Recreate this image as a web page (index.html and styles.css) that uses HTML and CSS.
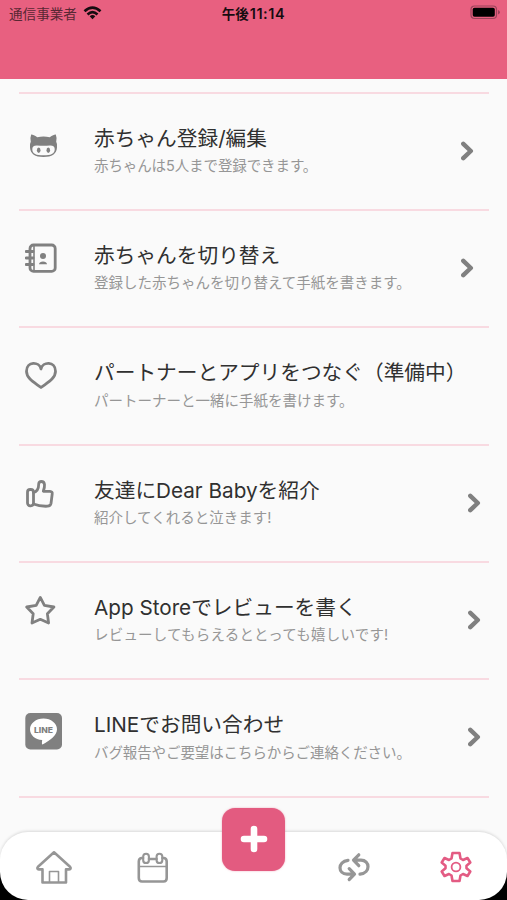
FILE: index.html
```html
<!DOCTYPE html>
<html lang="ja">
<head>
<meta charset="utf-8">
<title>Dear Baby</title>
<link rel="stylesheet" href="styles.css">
</head>
<body>
<div class="screen">
  <header class="header">
    <div class="carrier"><span>通信事業者</span>
      <svg width="19" height="14" viewBox="0 0 18 14" fill="none" stroke="#160c10" stroke-width="2.7"><path d="M1 5.2Q9-2 17 5.2M4 8.4Q9 4 14 8.4"/><path d="M6.2 10.2Q9 7.8 11.8 10.2L9 13.2Z" fill="#160c10" stroke="none"/></svg>
    </div>
    <time class="clock">午後<span>11:14</span></time>
    <svg class="battery" width="31" height="15" viewBox="0 0 31 15"><rect x="1" y="1" width="25.5" height="12.5" rx="3.5" fill="none" stroke="#9b435a" stroke-width="1.2"/><rect x="2.7" y="2.7" width="22.1" height="9.1" rx="1.8" fill="#000"/><path d="M28 5v4.5q2-.7 2-2.2T28 5" fill="#9b435a"/></svg>
  </header>
  <main class="list">
    <section class="row">
      <svg class="icon cat" width="40" height="44" viewBox="0 0 40 44"><path fill="#808080" d="M6.2 7.5Q8 7.2 12.3 10.3Q18.5 8.5 24.7 10.3Q29 7.2 30.8 7.5Q32.3 11.5 31.2 14.8Q32.5 17 32 20.5C31.6 27 27 30 18.5 30S5.4 27 5 20.5Q4.5 17 5.8 14.8Q4.7 11.5 6.2 7.5Z"/><path fill="#fafafa" d="M12 18.4Q18.5 19 25 18.4Q30 18.3 29.7 22.5C29.5 27.1 26 28.3 18.5 28.3S7.5 27.1 7.3 22.5Q7 18.3 12 18.4Z"/><ellipse cx="13.7" cy="23.2" rx="1.8" ry="2.7" fill="#808080"/><ellipse cx="23.3" cy="23.2" rx="1.8" ry="2.7" fill="#808080"/></svg>
      <div class="copy"><h2>赤ちゃん登録/編集</h2><p class="tight">赤ちゃんは5人まで登録できます。</p></div>
      <svg class="chevron inset" width="14" height="20" viewBox="0 0 14 20"><path d="M2.3 2.8L9.8 10L2.3 17.2"/></svg>
    </section>
    <section class="row">
      <svg class="icon line" width="40" height="44" viewBox="0 0 40 44"><rect x="5" y="3" width="25.2" height="26.4" rx="3.5"/><path d="M9 3.5V29" stroke-width="1.6"/><path d="M1 9.5H8M1 16H8M1 22.5H8"/><circle cx="18" cy="14" r="3" fill="#808080" stroke="none"/><path d="M14 22.2Q14.5 19.5 18 19.5T22 22.2Z" fill="#808080" stroke="none"/></svg>
      <div class="copy"><h2>赤ちゃんを切り替え</h2><p>登録した赤ちゃんを切り替えて手紙を書きます。</p></div>
      <svg class="chevron inset" width="14" height="20" viewBox="0 0 14 20"><path d="M2.3 2.8L9.8 10L2.3 17.2"/></svg>
    </section>
    <section class="row">
      <svg class="icon line" width="40" height="44" viewBox="0 0 40 44"><path d="M16 10C14.5 2.5 1.5 2 1.5 12.2C1.5 19.5 9.5 23.5 16 28.5C22.5 23.5 30.5 19.5 30.5 12.2C30.5 2 17.5 2.5 16 10Z"/></svg>
      <div class="copy"><h2>パートナーとアプリをつなぐ（準備中）</h2><p>パートーナーと一緒に手紙を書けます。</p></div>
    </section>
    <section class="row">
      <svg class="icon line" width="40" height="44" viewBox="0 0 40 44"><rect x="2.5" y="12.5" width="6" height="16.3" rx="2.7"/><path d="M8.5 15.5C12.5 14.5 13.7 11.5 13.7 7Q14 4.5 16.3 4.5C20.5 4.5 20 9.5 18.3 14.3H25Q27.7 14.5 27.2 17L26 26.5Q25.5 29 22.5 29.2Q14.5 29.5 8.5 27"/></svg>
      <div class="copy"><h2>友達にDear Babyを紹介</h2><p>紹介してくれると泣きます!</p></div>
      <svg class="chevron" width="14" height="20" viewBox="0 0 14 20"><path d="M2.3 2.8L9.8 10L2.3 17.2"/></svg>
    </section>
    <section class="row">
      <svg class="icon line" width="40" height="44" viewBox="0 0 40 44"><path d="M15.3 3.4L19.4 11.4L28.9 13L22.4 19.8L23.6 29L15.3 25.3L7 29L8.2 19.8L1.7 13L11.2 11.4Z"/></svg>
      <div class="copy"><h2>App Storeでレビューを書く</h2><p class="wide">レビューしてもらえるととっても嬉しいです!</p></div>
      <svg class="chevron" width="14" height="20" viewBox="0 0 14 20"><path d="M2.3 2.8L9.8 10L2.3 17.2"/></svg>
    </section>
    <section class="row">
      <svg class="icon app" width="40" height="44" viewBox="0 0 40 44"><rect x=".3" y="4" width="36.7" height="36.4" rx="5" fill="#808080"/><path fill="#fff" d="M18.5 9.5C26 9.5 32 14.3 32 20.2C32 26.5 25 31.5 17.5 35.5Q16.5 35.5 17.2 31C10 30.5 5 26 5 20.2C5 14.3 11 9.5 18.5 9.5Z"/><text x="18.5" y="23.5" text-anchor="middle" class="line-label" textLength="19" lengthAdjust="spacingAndGlyphs">LINE</text></svg>
      <div class="copy"><h2>LINEでお問い合わせ</h2><p class="tight">バグ報告やご要望はこちらからご連絡ください。</p></div>
      <svg class="chevron" width="14" height="20" viewBox="0 0 14 20"><path d="M2.3 2.8L9.8 10L2.3 17.2"/></svg>
    </section>
  </main>
  <div class="dock">
    <nav class="tabs">
      <svg class="home" width="40" height="40" viewBox="0 0 40 40"><path d="M20 5.3L4 19.7Q2.3 22 5 22.4H8.5V35.5H32V22.4H35Q37.7 22 36 19.7Z"/><path d="M15.5 35V24.5H24.5V35" stroke-width="1.6"/></svg>
      <svg width="40" height="40" viewBox="0 0 40 40"><path d="M10 11H8.5Q5.8 11.5 5.8 14.5V31Q5.8 34.5 9 34.5H30.5Q33.7 34.5 33.7 31V14.5Q33.7 11.5 31 11H29.5M16 12H23.5"/><rect x="10.2" y="6.7" width="5.7" height="9.3" rx="2.85" stroke-width="2.1"/><rect x="23.6" y="6.7" width="5.7" height="9.3" rx="2.85" stroke-width="2.1"/><path d="M6 19.5H33.5" stroke-width="1.5"/></svg>
      <span></span>
      <svg class="sync" width="40" height="40" viewBox="0 0 40 40"><path d="M14 13.3C3 14.7 4 27.2 13 27.2H20M15.2 21.7L20.5 27.2L15.2 32.5M26 27.2C37 25.8 36 13.2 27 13.2H20M24.8 7.8L19.5 13.2L24.8 18.7"/></svg>
      <svg class="active" width="40" height="40" viewBox="0 0 40 40"><path d="M16.5 6H23.5L24.5 11.5L27 13L31.5 11L34.3 15.5L30.5 18.7V21.3L34.3 24.5L31.5 29L27 27L24.5 28.5L23.5 34H16.5L15.5 28.5L13 27L8.5 29L5.7 24.5L9.5 21.3V18.7L5.7 15.5L8.5 11L13 13L15.5 11.5Z"/><circle cx="20" cy="20" r="4.4" stroke-width="1.8"/></svg>
    </nav>
    <button class="add" aria-label="追加"><svg width="30" height="30" viewBox="0 0 30 30"><path d="M15 5V25M5 15H25"/></svg></button>
  </div>
</div>
</body>
</html>
```
FILE: styles.css
```css
* { box-sizing: border-box; }
body { margin: 0; font-family: Inter, "Noto Sans CJK JP", sans-serif; }
svg { display: block; flex: none; }
.screen { width: 507px; height: 900px; background: #fafafa; overflow: hidden; position: relative; }
.header { height: 79px; background: #e86080; display: grid; grid-template-columns: 1fr auto 1fr; align-items: start; padding: 5px 6px 0 9px; color: #160c10; }
.carrier { display: flex; gap: 6px; font-size: 13.6px; line-height: 18px; color: #582733; }
.carrier svg { margin-top: 1px; }
.clock { font-size: 13.5px; font-weight: 700; line-height: 18px; margin-left: -3px; }
.clock span { font-size: 14.5px; font-weight: 600; letter-spacing: .6px; margin-left: 1px; }
.battery { justify-self: end; }
.list { margin: 12.5px 18px 0 19px; border-top: 2px solid #f8dae1; }
.row { height: 117.35px; display: flex; border-bottom: 2px solid #f8dae1; }
.icon { margin: 31px 0 0 6px; }
.cat { margin-top: 33px; }
.app { margin-top: 28.6px; }
.line { fill: none; stroke: #808080; stroke-width: 2.8; stroke-linecap: round; stroke-linejoin: round; }
.line-label { font: 800 8px Inter, sans-serif; fill: #808080; }
.copy { flex: 1; margin: 31px 0 0 29px; white-space: nowrap; }
h2 { margin: 0; font-size: 20.7px; font-weight: 400; line-height: 28px; color: #303030; }
p { margin: 1.5px 0 0; font-size: 14.5px; line-height: 24px; color: #969696; }
p.tight { letter-spacing: -.1px; }
p.wide { letter-spacing: .2px; }
.chevron { margin: 47px 7px 0 0; fill: none; stroke: #808080; stroke-width: 4.5; stroke-linecap: round; stroke-linejoin: round; }
.inset { margin-right: 14px; }
.dock { position: absolute; left: 0; right: 0; bottom: 0; height: 68px; background: linear-gradient(#fafafa 50%, #000 50%); }
.tabs { height: 68px; background: #fff; border-radius: 28px; box-shadow: 0 -1px 3px #0002; display: grid; grid-template-columns: repeat(5, 100.6px); justify-content: center; justify-items: center; padding-top: 14.5px; fill: none; stroke: #969696; stroke-width: 2.6; stroke-linecap: round; stroke-linejoin: round; }
.home { margin-left: 3px; }
.sync { stroke-width: 3.2; }
.active { stroke: #e35b83; margin-left: 2px; }
.add { position: absolute; left: 222px; top: -24.5px; width: 63px; height: 63px; border: 0; border-radius: 13px; background: #e35b80; box-shadow: 0 0 2px #e35b8088; display: grid; place-items: center; padding: 0; }
.add path { stroke: #fff; stroke-width: 6.6; stroke-linecap: round; }
```
